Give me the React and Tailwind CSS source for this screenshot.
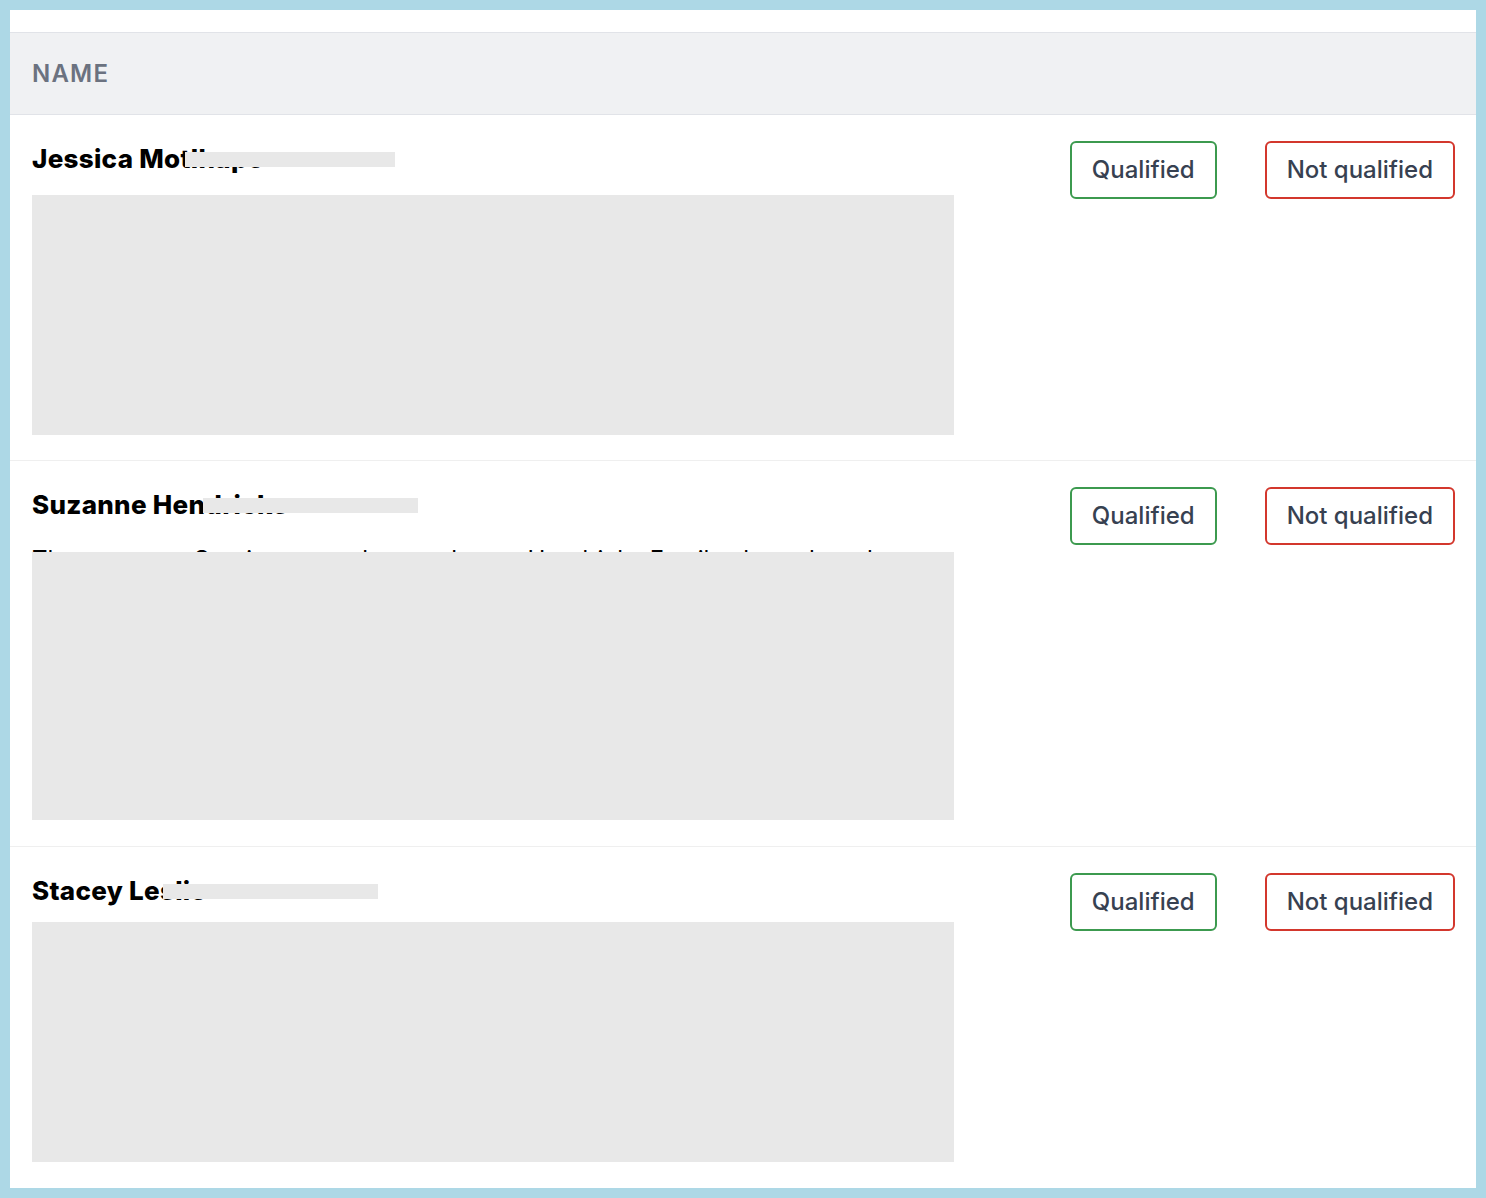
import React from "react";

const rows = [
  {
    first: "Jessica Mo",
    rest: "tlhape",
    maskLeft: "left-[153px]",
    maskWidth: "w-[210px]",
    descTop: "top-[6px]",
    descHeight: "h-[246px]",
    boxHeight: "h-[240px]",
    textShift: "pt-[9px]",
    pad: "pb-[25px] border-b border-[#efefef]",
    text:
      "Jessica has worked in retail for several years and is now looking for a position as a store supervisor. She has experience managing a small team and handling stock control, customer queries and weekly reporting. Jessica completed her matric and a short course in business administration.",
  },
  {
    first: "Suzanne He",
    rest: "ndricks",
    maskLeft: "left-[171px]",
    maskWidth: "w-[215px]",
    descTop: "top-[17px]",
    descHeight: "h-[285px]",
    boxHeight: "h-[268px]",
    textShift: "pt-[7px]",
    pad: "pb-[26px] border-b border-[#efefef]",
    text:
      "The company Services team has spoken to Hendricks Family about the role. Suzanne has been a bookkeeper for a local firm and is comfortable with payroll, invoicing and month end reconciliations. She is available to start immediately and would prefer a position close to home.",
  },
  {
    first: "Stacey Le",
    rest: "slie",
    maskLeft: "left-[131px]",
    maskWidth: "w-[215px]",
    descTop: "top-[1px]",
    descHeight: "h-[246px]",
    boxHeight: "h-[240px]",
    textShift: "-mt-[4px]",
    pad: "pb-[21px]",
    text:
      "Stacey is a recent graduate who has completed an internship at a marketing agency. She is eager to grow and has skills in social media, copywriting and basic design. Stacey lives nearby and is strong in writing and organising events for large groups. She can type quickly and is very good at planning.",
  },
];

function Row({ row }) {
  return (
    <div className={"flex justify-between pl-[22px] pr-[21px] pt-[26px] " + row.pad}>
      <div className="w-[922px]">
        {/* Name, partly hidden */}
        <div className="relative text-[26px] leading-[36px] font-extrabold tracking-[0.3px] text-black">
          {row.first}
          {row.rest}
          <div className={"absolute top-[11px] h-[15px] bg-[#e8e8e8] " + row.maskLeft + " " + row.maskWidth} />
        </div>

        {/* Description, hidden under a grey block */}
        <div className={"relative mt-[12px] overflow-hidden " + row.descHeight}>
          <p className={"text-[24px] leading-[36px] text-black " + row.textShift}>{row.text}</p>
          <div className={"absolute left-0 right-0 bg-[#e8e8e8] " + row.descTop + " " + row.boxHeight} />
        </div>
      </div>

      <div className="flex items-start gap-[48px]">
        <button className="h-[58px] px-[20px] rounded-[6px] border-2 border-[#3c9a4f] bg-white text-[24px] font-medium text-[#374151]">
          Qualified
        </button>
        <button className="h-[58px] px-[20px] rounded-[6px] border-2 border-[#d3372d] bg-white text-[24px] font-medium text-[#374151]">
          Not qualified
        </button>
      </div>
    </div>
  );
}

export default function App() {
  return (
    <div
      className="h-[1198px] w-[1486px] border-[10px] border-[#add8e6] bg-white overflow-hidden"
      style={{ fontFamily: "Inter, 'Noto Sans', sans-serif" }}
    >
      <div className="pt-[22px]">
        {/* Table header */}
        <div className="flex items-center h-[83px] px-[22px] pt-[1px] bg-[#f0f1f3] border-y border-[#e1e3e8]">
          <span className="text-[24px] font-semibold tracking-wider text-[#6b7280] uppercase">Name</span>
        </div>

        {rows.map((row) => (
          <Row key={row.first} row={row} />
        ))}
      </div>
    </div>
  );
}
